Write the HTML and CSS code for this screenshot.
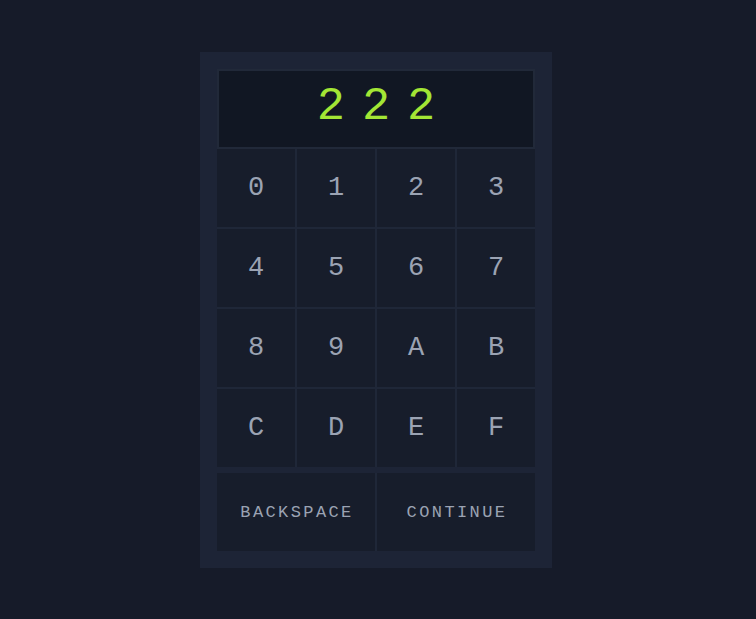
FILE: index.html
```html
<!DOCTYPE html>
<html>
<head>
<meta charset="utf-8">
<link rel="stylesheet" href="styles.css">
</head>
<body>
<div class="page">
  <div class="panel">
    <div class="display">222</div>
    <div class="keys">
      <button class="key">0</button>
      <button class="key">1</button>
      <button class="key">2</button>
      <button class="key">3</button>
      <button class="key">4</button>
      <button class="key">5</button>
      <button class="key">6</button>
      <button class="key">7</button>
      <button class="key">8</button>
      <button class="key">9</button>
      <button class="key">A</button>
      <button class="key">B</button>
      <button class="key">C</button>
      <button class="key">D</button>
      <button class="key">E</button>
      <button class="key">F</button>
    </div>
    <div class="actions">
      <button class="action">BACKSPACE</button>
      <button class="action">CONTINUE</button>
    </div>
  </div>
</div>
</body>
</html>
```
FILE: styles.css
```css
html, body {
  margin: 0;
  padding: 0;
  background: #161b29;
  height: 100%;
}
body {
  font-family: "Liberation Mono", monospace;
}
.page {
  padding-top: 52px;
  padding-right: 4px;
  display: flex;
  justify-content: center;
}
.panel {
  width: 318px;
  padding: 17px;
  background: #1d2436;
  display: flex;
  flex-direction: column;
}
.display {
  height: 70px;
  background: #111723;
  border: 2px solid #212939;
  display: flex;
  align-items: center;
  justify-content: center;
  color: #a3e635;
  font-size: 47px;
  letter-spacing: 17px;
  padding-left: 17px;
  padding-bottom: 6px;
  box-sizing: content-box;
  line-height: 1;
}
.keys {
  display: grid;
  grid-template-columns: repeat(4, 78px);
  grid-auto-rows: 78px;
  gap: 2px;
  background: #1f2738;
}
.key, .action {
  border: 0;
  margin: 0;
  padding: 0;
  background: #171d2b;
  color: #9ba3b3;
  font-family: "Liberation Mono", monospace;
}
.key {
  font-size: 27px;
}
.actions {
  margin-top: 6px;
  display: grid;
  grid-template-columns: 158px 158px;
  gap: 2px;
  background: #1f2738;
  height: 78px;
}
.action {
  font-size: 17px;
  letter-spacing: 2.4px;
  padding-left: 2px;
}
```
